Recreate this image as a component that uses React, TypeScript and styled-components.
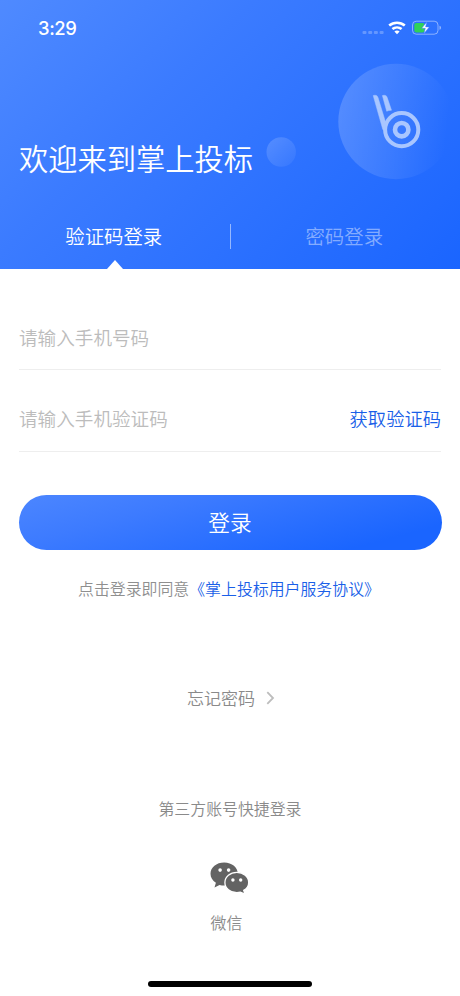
import React from 'react';
import styled, { createGlobalStyle } from 'styled-components';

const GlobalStyle = createGlobalStyle`
  * { box-sizing: border-box; }
  body {
    margin: 0;
    background: #fff;
    font-family: 'Noto Sans CJK SC', sans-serif;
    font-weight: 350;
  }
  button, input { font: inherit; border: 0; background: none; padding: 0; }
`;

const Screen = styled.div`
  width: 460px;
  height: 996px;
  display: flex;
  flex-direction: column;
  overflow: hidden;
  background: #fff;
`;

const Header = styled.header`
  position: relative;
  height: 269px;
  flex: none;
  display: flex;
  flex-direction: column;
  color: #fff;
  background: linear-gradient(135deg, #4f8aff 0%, #3b7bff 35%, #1a65ff 100%);
`;

const StatusBar = styled.div`
  height: 56px;
  padding: 0 19px 0 38px;
  display: flex;
  align-items: center;
  justify-content: space-between;
`;

const Clock = styled.span`
  font: 500 18.4px/22px Inter, sans-serif;
  letter-spacing: -0.4px;
`;

const StatusIcons = styled.svg`
  display: block;
  width: 80px;
  height: 20px;
`;

const Decoration = styled.svg`
  position: absolute;
  left: 260px;
  top: 56px;
  width: 200px;
  height: 132px;
`;

const Title = styled.h1`
  position: relative;
  margin: 79px 0 0 19px;
  font-size: 29.25px;
  line-height: 44px;
  font-weight: 350;
  white-space: nowrap;
`;

const Tabs = styled.nav`
  display: flex;
  align-items: center;
  margin-top: 32px;
  height: 50px;
`;

const Tab = styled.button<{ $active?: boolean }>`
  flex: 1;
  padding-right: 2px;
  color: ${p => (p.$active ? '#fff' : 'rgba(255,255,255,0.45)')};
  font-size: 19.4px;
  line-height: 30px;
`;

const TabDivider = styled.span`
  width: 1px;
  height: 25px;
  background: rgba(255, 255, 255, 0.5);
`;

const Pointer = styled.span`
  position: absolute;
  left: 107px;
  bottom: 0;
  border: 8px solid transparent;
  border-top: 0;
  border-bottom: 9px solid #fff;
`;

const Form = styled.form`
  padding: 32px 19px 0;
  display: flex;
  flex-direction: column;
`;

const Field = styled.div<{ $height: number; $offset: number }>`
  display: flex;
  align-items: center;
  height: ${p => p.$height}px;
  padding-top: ${p => p.$offset}px;
  border-bottom: 1px solid #eee;
`;

const Input = styled.input`
  flex: 1;
  min-width: 0;
  height: 32px;
  font-size: 18.6px;
  outline: none;
  &::placeholder { color: #bcbcbc; opacity: 1; }
`;

const CodeButton = styled.button`
  padding-top: 2px;
  color: #1a5fe8;
  font-size: 18.3px;
  line-height: 32px;
`;

const Submit = styled.button`
  margin: 43px -0.5px 0;
  height: 55px;
  border-radius: 28px;
  color: #fff;
  font-size: 21.7px;
  line-height: 53px;
  padding-bottom: 2px;
  background: linear-gradient(165deg, #4c86ff 0%, #3d7bff 30%, #1a65ff 85%);
`;

const Agreement = styled.p`
  margin: 27px 0 0 59px;
  font-size: 15.9px;
  line-height: 24px;
  color: #8f8f8f;
  white-space: nowrap;
`;

const Link = styled.a`
  color: #1a5fe8;
`;

const Forgot = styled.a`
  margin: 84px 0 0 187px;
  display: flex;
  align-items: center;
  gap: 11px;
  font-size: 17px;
  line-height: 26px;
  color: #8a8a8a;
`;

const ThirdParty = styled.section`
  margin-top: 86px;
  display: flex;
  flex-direction: column;
  align-items: center;
  font-size: 15.9px;
  line-height: 24px;
  color: #8a8a8a;
`;

const WeChat = styled.button`
  margin: 41px 0 0 -6px;
  display: flex;
  flex-direction: column;
  align-items: center;
  color: #8a8a8a;
  line-height: 24px;
  svg { margin-left: 5px; }
  span { margin-top: 17px; margin-right: 1px; }
`;

const HomeIndicator = styled.div`
  width: 164px;
  height: 6px;
  margin: auto auto 9px;
  border-radius: 3px;
  background: #000;
`;

function StatusGlyphs() {
  return (
    <StatusIcons viewBox="0 0 80 20">
      <g fill="#fff" opacity=".25">
        <rect x="1.5" y="12.9" width="4" height="3.2" rx="1" />
        <rect x="7.2" y="12.9" width="4" height="3.2" rx="1" />
        <rect x="12.9" y="12.9" width="4" height="3.2" rx="1" />
        <rect x="18.6" y="12.9" width="4" height="3.2" rx="1" />
      </g>
      <g fill="none" stroke="#fff" strokeWidth="2.6">
        <path d="M28.2 7.6a12 12 0 0 1 15.6 0" />
        <path d="M31.4 11.1a7.2 7.2 0 0 1 9.2 0" />
      </g>
      <path d="M33.4 13.4a4.2 4.2 0 0 1 5.2 0L36 16.2z" fill="#fff" />
      <rect x="51.5" y="3.2" width="25.5" height="13" rx="3.8" fill="none" stroke="#fff" strokeOpacity=".45" />
      <path d="M78.5 7.7c2 .8 2 3.2 0 4z" fill="#fff" opacity=".5" />
      <rect x="53.3" y="4.9" width="10.2" height="9.6" rx="2" fill="#30d158" />
      <path d="M65.8 3.9l-5.1 6.4h3.6l-1.3 5.3 5.3-6.7h-3.7z" fill="#fff" stroke="#3f7eff" strokeWidth=".5" />
    </StatusIcons>
  );
}

function HeaderArt() {
  return (
    <Decoration viewBox="260 56 200 132">
      <defs>
        <linearGradient id="orb" x1="0" y1=".45" x2="1" y2=".55">
          <stop offset="0" stopColor="#fff" stopOpacity=".18" />
          <stop offset=".5" stopColor="#fff" stopOpacity=".09" />
          <stop offset=".95" stopColor="#fff" stopOpacity="0" />
        </linearGradient>
        <linearGradient id="dot" x1="0" y1="0" x2="1" y2="1">
          <stop offset="0" stopColor="#fff" stopOpacity=".18" />
          <stop offset="1" stopColor="#fff" stopOpacity=".04" />
        </linearGradient>
      </defs>
      <circle cx="396" cy="121.5" r="57.7" fill="url(#orb)" />
      <circle cx="281.2" cy="152" r="14.7" fill="url(#dot)" />
      <g fill="none" stroke="#a9c6ff">
        <circle cx="401.7" cy="129.7" r="16.6" strokeWidth="4" />
        <circle cx="401.7" cy="129.7" r="6.7" strokeWidth="4.6" />
      </g>
      <path d="M373.2 95.6q3.9-1.2 4.8 2l7.8 25.4.4 7.5-3.4-1z" fill="#a9c6ff" stroke="#a9c6ff" strokeWidth=".5" />
      <path d="M382.4 95.6q3.9-1.2 4.8 2l4.3 12.6q-3.2.2-4.8 1z" fill="#a9c6ff" stroke="#a9c6ff" strokeWidth=".5" />
    </Decoration>
  );
}

function WeChatIcon() {
  return (
    <svg width="39" height="32" viewBox="0 0 39 32">
      <path
        d="M14.2.6C6.4.6.5 5.5.5 11.8c0 3.8 2 6.8 5.4 8.9l-1.4 4.9 5-2.7c1.6.5 3.1.7 4.7.7 7.8 0 13.7-5.1 13.7-11.5S22 .6 14.2.6z"
        fill="#636363"
      />
      <path
        d="M26.8 10.3c-6.6 0-11.9 4.5-11.9 10.2s5.3 10.2 11.9 10.2c1.3 0 2.5-.2 3.6-.5l4.6 1.8-1.3-3.6c3.2-1.8 5-4.7 5-7.9 0-5.7-5.3-10.2-11.9-10.2z"
        fill="#636363"
        stroke="#fff"
        strokeWidth="1.3"
      />
      <g fill="#fff">
        <circle cx="10.1" cy="8.1" r="1.8" />
        <circle cx="18.6" cy="8.1" r="1.8" />
        <circle cx="22.9" cy="18" r="1.7" />
        <circle cx="30.7" cy="18" r="1.7" />
      </g>
    </svg>
  );
}

export default function App() {
  return (
    <Screen>
      <GlobalStyle />
      <Header>
        <HeaderArt />
        <StatusBar>
          <Clock>3:29</Clock>
          <StatusGlyphs />
        </StatusBar>
        <Title>欢迎来到掌上投标</Title>
        <Tabs>
          <Tab $active>验证码登录</Tab>
          <TabDivider />
          <Tab>密码登录</Tab>
        </Tabs>
        <Pointer />
      </Header>
      <Form onSubmit={e => e.preventDefault()}>
        <Field $height={69} $offset={2}>
          <Input placeholder="请输入手机号码" />
        </Field>
        <Field $height={82} $offset={13}>
          <Input placeholder="请输入手机验证码" />
          <CodeButton type="button">获取验证码</CodeButton>
        </Field>
        <Submit>登录</Submit>
        <Agreement>
          点击登录即同意<Link>《掌上投标用户服务协议》</Link>
        </Agreement>
      </Form>
      <Forgot>
        忘记密码
        <svg width="9" height="14" viewBox="0 0 9 14" fill="none" stroke="#bdbdbd" strokeWidth="1.8">
          <path d="M1.3 1.2L7 7l-5.7 5.8" />
        </svg>
      </Forgot>
      <ThirdParty>
        第三方账号快捷登录
        <WeChat>
          <WeChatIcon />
          <span>微信</span>
        </WeChat>
      </ThirdParty>
      <HomeIndicator />
    </Screen>
  );
}
